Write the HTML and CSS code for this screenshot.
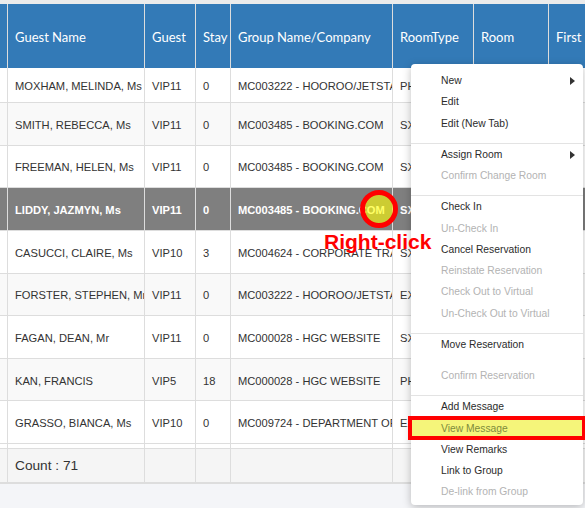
FILE: index.html
```html
<!DOCTYPE html>
<html>
<head>
<meta charset="utf-8">
<link rel="stylesheet" href="styles.css">
</head>
<body>
<div class="page">
  <div class="topstrip"></div>
  <div class="grid">
    <div class="row head">
      <div class="c stub"></div>
      <div class="c">Guest Name</div>
      <div class="c">Guest</div>
      <div class="c">Stay</div>
      <div class="c">Group Name/Company</div>
      <div class="c">RoomType</div>
      <div class="c">Room</div>
      <div class="c">First</div>
    </div>
    <div class="row first">
      <div class="c stub"></div>
      <div class="c">MOXHAM, MELINDA, Ms</div>
      <div class="c">VIP11</div>
      <div class="c">0</div>
      <div class="c">MC003222 - HOOROO/JETSTAR</div>
      <div class="c">PHK</div>
      <div class="c"></div>
      <div class="c"></div>
    </div>
    <div class="row alt">
      <div class="c stub"></div>
      <div class="c">SMITH, REBECCA, Ms</div>
      <div class="c">VIP11</div>
      <div class="c">0</div>
      <div class="c">MC003485 - BOOKING.COM</div>
      <div class="c">SXK</div>
      <div class="c"></div>
      <div class="c"></div>
    </div>
    <div class="row">
      <div class="c stub"></div>
      <div class="c">FREEMAN, HELEN, Ms</div>
      <div class="c">VIP11</div>
      <div class="c">0</div>
      <div class="c">MC003485 - BOOKING.COM</div>
      <div class="c">SXK</div>
      <div class="c"></div>
      <div class="c"></div>
    </div>
    <div class="row selected">
      <div class="c stub"></div>
      <div class="c">LIDDY, JAZMYN, Ms</div>
      <div class="c">VIP11</div>
      <div class="c">0</div>
      <div class="c">MC003485 - BOOKING.COM</div>
      <div class="c">SXK</div>
      <div class="c"></div>
      <div class="c"></div>
    </div>
    <div class="row">
      <div class="c stub"></div>
      <div class="c">CASUCCI, CLAIRE, Ms</div>
      <div class="c">VIP10</div>
      <div class="c">3</div>
      <div class="c">MC004624 - CORPORATE TRAVEL</div>
      <div class="c">SXK</div>
      <div class="c"></div>
      <div class="c"></div>
    </div>
    <div class="row alt">
      <div class="c stub"></div>
      <div class="c">FORSTER, STEPHEN, Mr</div>
      <div class="c">VIP11</div>
      <div class="c">0</div>
      <div class="c">MC003222 - HOOROO/JETSTAR</div>
      <div class="c">EXK</div>
      <div class="c"></div>
      <div class="c"></div>
    </div>
    <div class="row">
      <div class="c stub"></div>
      <div class="c">FAGAN, DEAN, Mr</div>
      <div class="c">VIP11</div>
      <div class="c">0</div>
      <div class="c">MC000028 - HGC WEBSITE</div>
      <div class="c">SXK</div>
      <div class="c"></div>
      <div class="c"></div>
    </div>
    <div class="row alt">
      <div class="c stub"></div>
      <div class="c">KAN, FRANCIS</div>
      <div class="c">VIP5</div>
      <div class="c">18</div>
      <div class="c">MC000028 - HGC WEBSITE</div>
      <div class="c">PHK</div>
      <div class="c"></div>
      <div class="c"></div>
    </div>
    <div class="row">
      <div class="c stub"></div>
      <div class="c">GRASSO, BIANCA, Ms</div>
      <div class="c">VIP10</div>
      <div class="c">0</div>
      <div class="c">MC009724 - DEPARTMENT OF DEFENCE</div>
      <div class="c">EXK</div>
      <div class="c"></div>
      <div class="c"></div>
    </div>
    <div class="row gap">
      <div class="c stub"></div>
      <div class="c"></div>
      <div class="c"></div>
      <div class="c"></div>
      <div class="c"></div>
      <div class="c"></div>
      <div class="c"></div>
      <div class="c"></div>
    </div>
    <div class="row foot">
      <div class="c stub"></div>
      <div class="c">Count : 71</div>
      <div class="c"></div>
      <div class="c"></div>
      <div class="c"></div>
      <div class="c"></div>
      <div class="c"></div>
      <div class="c"></div>
    </div>
  </div>

  <div class="menu">
    <div class="item sub">New</div>
    <div class="item">Edit</div>
    <div class="item">Edit (New Tab)</div>
    <div class="sep"></div>
    <div class="item sub">Assign Room</div>
    <div class="item off">Confirm Change Room</div>
    <div class="sep"></div>
    <div class="item">Check In</div>
    <div class="item off">Un-Check In</div>
    <div class="item">Cancel Reservation</div>
    <div class="item off">Reinstate Reservation</div>
    <div class="item off">Check Out to Virtual</div>
    <div class="item off">Un-Check Out to Virtual</div>
    <div class="sep"></div>
    <div class="item">Move Reservation</div>
    <div class="sep blank"></div>
    <div class="item off">Confirm Reservation</div>
    <div class="sep"></div>
    <div class="item">Add Message</div>
    <div class="item hl">View Message</div>
    <div class="item">View Remarks</div>
    <div class="item">Link to Group</div>
    <div class="item off">De-link from Group</div>
  </div>

  <div class="marker"></div>
  <div class="callout">Right-click</div>
</div>
</body>
</html>
```
FILE: styles.css
```css
html, body {
  margin: 0;
  padding: 0;
}
body {
  font-family: "Liberation Sans", Arial, sans-serif;
  color: #333;
}
.page {
  position: relative;
  width: 585px;
  height: 508px;
  overflow: hidden;
  background: #f4f5f8;
}
.topstrip {
  height: 4px;
  background: #ebebeb;
}
.grid {
  width: 648px;
}
.row {
  display: grid;
  grid-template-columns: 7px 137px 51px 35px 162px 81px 75px 100px;
  height: 42.625px;
  box-sizing: border-box;
  border-bottom: 1px solid #ddd;
  background: #fff;
  font-size: 11.15px;
}
.row.alt {
  background: #f9f9f9;
}
.row.first {
  height: 35px;
}
.c {
  display: flex;
  align-items: center;
  padding: 2px 0 0 7px;
  box-sizing: border-box;
  border-left: 1px solid #ddd;
  white-space: nowrap;
  overflow: hidden;
  min-width: 0;
}
.c.stub {
  border-left: 0;
  padding: 0;
}
.row.head {
  height: 64px;
  background: #337ab7;
  color: #fff;
  font-family: Lato, "Liberation Sans", sans-serif;
  font-size: 13px;
  border-bottom: 0;
}
.row.head .c {
  padding-top: 1px;
  padding-bottom: 0;
}
.row.selected {
  background: #7f7f7f;
  color: #fff;
  font-weight: bold;
}
.row.gap {
  height: 5px;
  border-bottom: 1px solid #ddd;
}
.row.foot {
  height: 35px;
  background: #f5f5f5;
  border-bottom: 2px solid #ddd;
  font-size: 13.7px;
}
.row.foot .c {
  padding-top: 0;
}
.marker {
  position: absolute;
  left: 360px;
  top: 190px;
  width: 38px;
  height: 38px;
  box-sizing: border-box;
  border: 5px solid #f00;
  border-radius: 50%;
  background: rgba(255, 255, 0, 0.6);
  z-index: 6;
}
.callout {
  position: absolute;
  left: 324px;
  top: 231px;
  font-size: 21px;
  line-height: 21px;
  font-weight: bold;
  color: #f00;
  white-space: nowrap;
  z-index: 7;
}
.menu {
  position: absolute;
  left: 411px;
  top: 64px;
  width: 172px;
  padding: 6.2px 0 2px;
  background: #fff;
  border-radius: 4px;
  box-shadow: 0 2px 8px rgba(0, 0, 0, 0.25);
  font-size: 10.3px;
  z-index: 5;
}
.item {
  position: relative;
  height: 21.25px;
  line-height: 21.25px;
  padding-left: 30px;
  color: #2b2b2b;
  white-space: nowrap;
}
.item.off {
  color: #b3b3b3;
}
.item.sub::after {
  content: "";
  position: absolute;
  right: 8px;
  top: 7px;
  border-style: solid;
  border-width: 4px 0 4px 5px;
  border-color: transparent transparent transparent #333;
}
.sep {
  margin-top: 9px;
  border-bottom: 1px solid #e3e3e3;
}
.sep.blank {
  border-bottom-color: transparent;
}
.item.hl {
  color: #7d8b3c;
}
.item.hl::before {
  content: "";
  position: absolute;
  left: -3px;
  right: -3px;
  top: -2px;
  bottom: -1px;
  border: 4px solid #f00;
  background: #f5f57a;
  z-index: -1;
}
```
